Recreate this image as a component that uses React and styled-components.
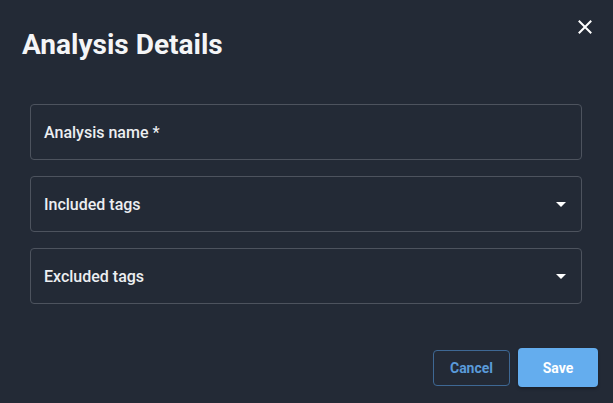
import React from "react";
import styled, { createGlobalStyle } from "styled-components";

const Global = createGlobalStyle`
  html, body { margin: 0; padding: 0; background: #232a36; }
  * { box-sizing: border-box; }
`;

const Dialog = styled.div`
  position: relative;
  width: 613px;
  height: 403px;
  background: #232a36;
  font-family: Roboto, "Noto Sans", sans-serif;
  color: #ffffff;
  display: flex;
  flex-direction: column;
`;

const Title = styled.h2`
  margin: 0;
  padding: 29px 22px 0 22px;
  font-size: 28px;
  line-height: 32px;
  font-weight: 700;
  color: #f4f5f7;
`;

const CloseButton = styled.button`
  position: absolute;
  top: 15px;
  right: 16px;
  width: 24px;
  height: 24px;
  padding: 0;
  border: none;
  background: transparent;
  display: flex;
  align-items: center;
  justify-content: center;
  cursor: pointer;
`;

const Fields = styled.div`
  display: flex;
  flex-direction: column;
  gap: 16px;
  padding: 43px 31px 0 30px;
`;

const Field = styled.div`
  height: 56px;
  border: 1px solid #4d535e;
  border-radius: 4px;
  display: flex;
  align-items: center;
  justify-content: space-between;
  padding: 0 8px 0 13px;
`;

const Label = styled.span`
  font-size: 16px;
  font-weight: 500;
  color: #eceef1;
`;

const Actions = styled.div`
  margin-top: auto;
  display: flex;
  justify-content: flex-end;
  align-items: center;
  gap: 8px;
  padding: 0 15px 16px 0;
`;

const Button = styled.button`
  font-family: Roboto, "Noto Sans", sans-serif;
  font-size: 14px;
  font-weight: 700;
  border-radius: 4px;
  cursor: pointer;
  ${(p) =>
    p.$primary
      ? `
    width: 80px;
    height: 39px;
    background: #64adee;
    color: #ffffff;
    border: none;
    box-shadow: 0 2px 3px rgba(0,0,0,0.25);
  `
      : `
    width: 77px;
    height: 36px;
    margin-top: 1px;
    background: transparent;
    color: #5a9ad9;
    border: 1px solid #3e6894;
  `}
`;

const Arrow = () => (
  <svg width="24" height="24" viewBox="0 0 24 24" fill="#ffffff">
    <path d="M7 10l5 5 5-5z" />
  </svg>
);

export default function App() {
  return (
    <>
      <Global />
      <Dialog>
        <Title>Analysis Details</Title>
        <CloseButton aria-label="close">
          <svg width="14" height="14" viewBox="0 0 14 14" stroke="#ffffff" strokeWidth="2" strokeLinecap="square">
            <path d="M1.5 1.5L12.5 12.5M12.5 1.5L1.5 12.5" />
          </svg>
        </CloseButton>
        <Fields>
          <Field>
            <Label>Analysis name *</Label>
          </Field>
          <Field>
            <Label>Included tags</Label>
            <Arrow />
          </Field>
          <Field>
            <Label>Excluded tags</Label>
            <Arrow />
          </Field>
        </Fields>
        <Actions>
          <Button>Cancel</Button>
          <Button $primary>Save</Button>
        </Actions>
      </Dialog>
    </>
  );
}
